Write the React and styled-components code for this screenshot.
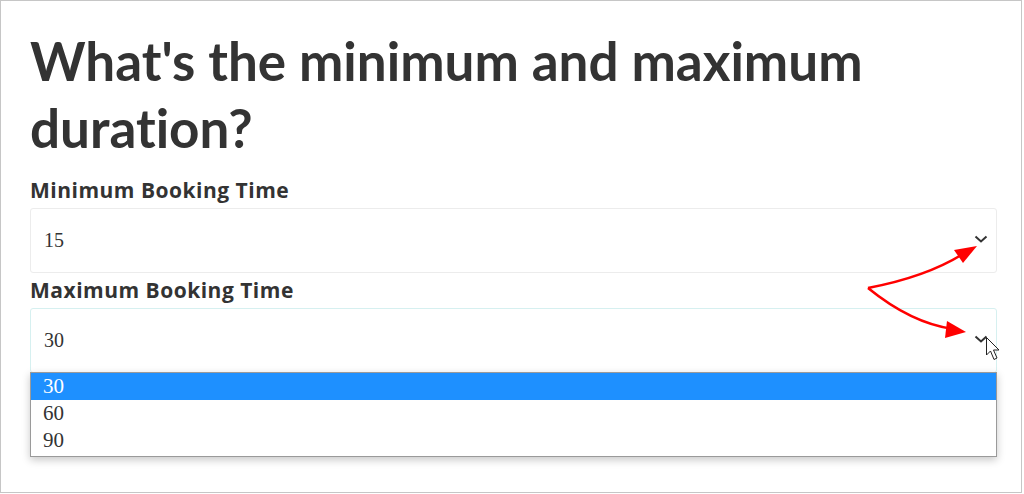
import React from "react"
import styled, { createGlobalStyle } from "styled-components"

const GlobalStyle = createGlobalStyle`
  body {
    margin: 0;
    background: #fff;
  }
  * {
    box-sizing: border-box;
  }
`

const Frame = styled.div`
  position: relative;
  width: 1022px;
  height: 493px;
  border: 1px solid #c6c6c6;
  padding: 26px 0 0 29px;
  overflow: hidden;
`

const Form = styled.div`
  width: 967px;
`

const Heading = styled.h1`
  margin: 0 0 12px;
  font-family: Lato, "Open Sans", sans-serif;
  font-weight: 700;
  font-size: 53px;
  line-height: 67px;
  color: #333;
  font-variant-ligatures: none;
`

const Label = styled.label`
  display: block;
  font-family: "Open Sans", Lato, sans-serif;
  font-weight: 700;
  font-size: 21px;
  line-height: 35px;
  letter-spacing: 0.5px;
  color: #333;
`

const Field = styled.div`
  position: relative;
`

const SelectBox = styled.div`
  display: flex;
  align-items: center;
  justify-content: space-between;
  height: 65px;
  padding: 0 7px 0 13px;
  border: 1px solid ${(p) => (p.$focused ? "#d6f0f0" : "#ececec")};
  border-radius: 3px;
  font-family: "Liberation Serif", serif;
  font-size: 20px;
  color: #333;
`

const Chevron = styled.svg`
  width: 14px;
  height: 8px;
  margin-top: -4px;
  margin-right: 1px;
`

const ListBox = styled.ul`
  position: absolute;
  left: 0;
  right: 0;
  top: 64px;
  margin: 0;
  padding: 0 0 2px;
  list-style: none;
  background: #fff;
  border: 1px solid #9a9a9a;
  box-shadow: 0 3px 8px rgba(0, 0, 0, 0.22);
  z-index: 2;
`

const Option = styled.li`
  height: 27px;
  line-height: 27px;
  padding-left: 12px;
  font-family: "Liberation Serif", serif;
  font-size: 21px;
  color: ${(p) => (p.$active ? "#fff" : "#333")};
  background: ${(p) => (p.$active ? "#1e90ff" : "#fff")};
`

const Overlay = styled.svg`
  position: absolute;
  left: 0;
  top: 0;
  width: 1022px;
  height: 493px;
  pointer-events: none;
  z-index: 3;
`

const ChevronIcon = () => (
  <Chevron viewBox="0 0 14 8">
    <path d="M1.5 1.5 L7 6.5 L12.5 1.5" fill="none" stroke="#333" strokeWidth="2" />
  </Chevron>
)

const SelectField = ({ value, focused, options, active }) => (
  <Field>
    <SelectBox $focused={focused}>
      <span>{value}</span>
      <ChevronIcon />
    </SelectBox>
    {options && (
      <ListBox>
        {options.map((o) => (
          <Option key={o} $active={o === active}>
            {o}
          </Option>
        ))}
      </ListBox>
    )}
  </Field>
)

export default function App() {
  return (
    <>
      <GlobalStyle />
      <Frame>
        <Form>
          <Heading>
            What's the minimum and maximum
            <br />
            duration?
          </Heading>
          <Label>Minimum Booking Time</Label>
          <SelectField value="15" />
          <Label>Maximum Booking Time</Label>
          <SelectField value="30" focused options={["30", "60", "90"]} active="30" />
        </Form>
        {/* annotation arrows and mouse cursor */}
        <Overlay viewBox="0 0 1022 493">
          <path d="M867 287 Q925 276 962 253" fill="none" stroke="#f00" strokeWidth="2.5" />
          <polygon points="976,245 953,249 962,262" fill="#f00" />
          <path d="M867 287 Q910 322 952 328" fill="none" stroke="#f00" strokeWidth="2.5" />
          <polygon points="965,331 946,320 944,337" fill="#f00" />
          <path
            d="M985.5 336.5 L985.5 354 L989.5 350 L993 358.5 L996 357 L992.5 349 L998 349 Z"
            fill="#fff"
            stroke="#222"
            strokeWidth="1"
            strokeLinejoin="round"
          />
        </Overlay>
      </Frame>
    </>
  )
}
